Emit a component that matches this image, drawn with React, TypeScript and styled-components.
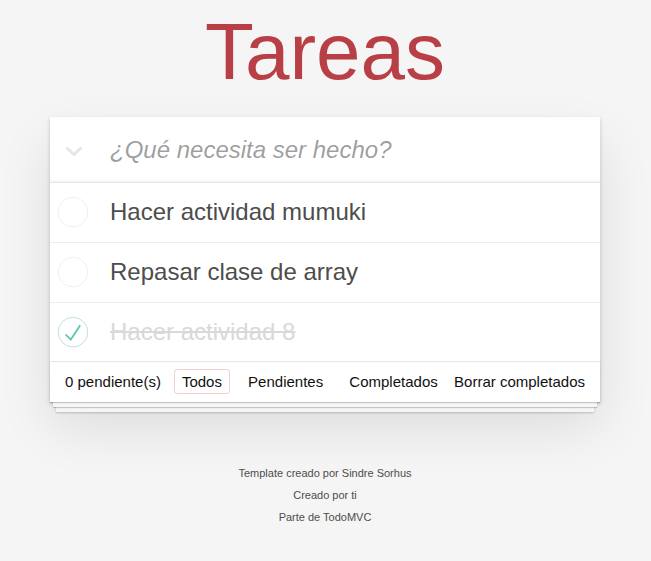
import React from "react";
import styled, { createGlobalStyle } from "styled-components";

const GlobalStyle = createGlobalStyle`
  html, body { margin: 0; padding: 0; }
  body {
    background: #f5f5f5;
    font: 14px "Liberation Sans", Arial, sans-serif;
    line-height: 1.4em;
    color: #4d4d4d;
    padding-right: 1px;
  }
  * { box-sizing: border-box; }
`;

const Page = styled.section`
  max-width: 550px;
  margin: 0 auto;
`;

const Title = styled.h1`
  margin: 12px 0 25px;
  font-size: 80px;
  line-height: 80px;
  font-weight: 400;
  text-align: center;
  color: #b83f45;
`;

const Card = styled.div`
  background: #fff;
  box-shadow: 0 2px 4px 0 rgba(0, 0, 0, 0.2), 0 25px 50px 0 rgba(0, 0, 0, 0.1);
`;

const Header = styled.header`
  display: flex;
  align-items: center;
  height: 65px;
  box-shadow: inset 0 -2px 1px rgba(0, 0, 0, 0.03);
`;

const ToggleAll = styled.svg`
  flex: none;
  margin: 3px 27px 0 15px;
`;

const NewTodo = styled.input`
  flex: 1;
  min-width: 0;
  height: 65px;
  border: none;
  outline: none;
  background: transparent;
  padding: 16px 16px 16px 0;
  font: 24px "Liberation Sans", Arial, sans-serif;
  line-height: 1.4em;
  color: #4d4d4d;
  &::placeholder {
    font-style: italic;
    color: rgba(0, 0, 0, 0.4);
  }
`;

const List = styled.ul`
  margin: 0;
  padding: 0;
  list-style: none;
  border-top: 1px solid #e6e6e6;
`;

const Item = styled.li`
  display: flex;
  align-items: center;
  font-size: 24px;
  border-bottom: 1px solid #ededed;
  &:last-child { border-bottom: none; }
`;

const ToggleIcon = styled.svg`
  flex: none;
`;

const Label = styled.label<{ $done?: boolean }>`
  flex: 1;
  display: block;
  padding: 15px 15px 15px 20px;
  line-height: 1.2;
  color: ${(p) => (p.$done ? "#d9d9d9" : "#4d4d4d")};
  text-decoration: ${(p) => (p.$done ? "line-through" : "none")};
`;

const Footer = styled.footer`
  display: flex;
  align-items: flex-start;
  height: 41px;
  padding: 10px 15px;
  font-size: 15px;
  line-height: 19.6px;
  color: #111;
  border-top: 1px solid #e6e6e6;
  box-shadow: 0 1px 1px rgba(0, 0, 0, 0.2), 0 8px 0 -3px #f6f6f6,
    0 9px 1px -3px rgba(0, 0, 0, 0.2), 0 16px 0 -6px #f6f6f6,
    0 17px 2px -6px rgba(0, 0, 0, 0.2);
`;

const Count = styled.span``;

const Filters = styled.ul`
  margin: 0 0 0 10px;
  padding: 0;
  list-style: none;
`;

const Filter = styled.li`
  display: inline;
`;

const FilterLink = styled.a<{ $selected?: boolean }>`
  color: inherit;
  margin: 3px;
  padding: 3px 7px;
  text-decoration: none;
  border: 1px solid ${(p) => (p.$selected ? "rgba(206, 70, 70, 0.25)" : "transparent")};
  border-radius: 3px;
`;

const Clear = styled.span`
  margin-left: auto;
`;

const Info = styled.footer`
  margin: 66px auto 0;
  font-size: 11px;
  color: #4d4d4d;
  text-align: center;
`;

const InfoLine = styled.p`
  margin: 11px 0;
  line-height: 1;
`;

const Circle = ({ done }: { done?: boolean }) => (
  <ToggleIcon width="40" height="40" viewBox="-10 -18 100 135">
    <circle
      cx="50"
      cy="50"
      r="50"
      fill="none"
      stroke={done ? "#bddad5" : "#ededed"}
      strokeWidth="3"
    />
    {done && <path fill="#5dc2af" d="M72 25L42 71 27 56l-4 4 20 20 34-52z" />}
  </ToggleIcon>
);

const todos = [
  { text: "Hacer actividad mumuki", done: false },
  { text: "Repasar clase de array", done: false },
  { text: "Hacer actividad 8", done: true },
];

export default function App() {
  return (
    <>
      <GlobalStyle />
      <Page>
        <Title>Tareas</Title>
        <Card>
          <Header>
            <ToggleAll width="18" height="10" viewBox="0 0 18 10">
              <polyline
                points="1.5,1.5 9,8.5 16.5,1.5"
                fill="none"
                stroke="#e6e6e6"
                strokeWidth="3"
              />
            </ToggleAll>
            <NewTodo placeholder="¿Qué necesita ser hecho?" />
          </Header>
          <List>
            {todos.map((t) => (
              <Item key={t.text}>
                <Circle done={t.done} />
                <Label $done={t.done}>{t.text}</Label>
              </Item>
            ))}
          </List>
          <Footer>
            <Count>0 pendiente(s)</Count>
            <Filters>
              <Filter>
                <FilterLink href="#/" $selected>Todos</FilterLink>
              </Filter>{" "}
              <Filter>
                <FilterLink href="#/active">Pendientes</FilterLink>
              </Filter>{" "}
              <Filter>
                <FilterLink href="#/completed">Completados</FilterLink>
              </Filter>
            </Filters>
            <Clear>Borrar completados</Clear>
          </Footer>
        </Card>
        <Info>
          <InfoLine>Template creado por Sindre Sorhus</InfoLine>
          <InfoLine>Creado por ti</InfoLine>
          <InfoLine>Parte de TodoMVC</InfoLine>
        </Info>
      </Page>
    </>
  );
}
